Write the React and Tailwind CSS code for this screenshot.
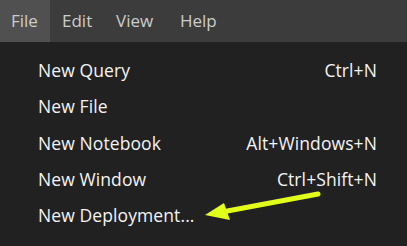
const items = [
    { label: "New Query", shortcut: "Ctrl+N" },
    { label: "New File", shortcut: "" },
    { label: "New Notebook", shortcut: "Alt+Windows+N" },
    { label: "New Window", shortcut: "Ctrl+Shift+N" },
    { label: "New Deployment...", shortcut: "" },
]

const App = () => {
    return (
        <div className="w-[407px] h-[246px] bg-[#212121] overflow-hidden font-['Open_Sans',sans-serif] relative">
            {/* Menu bar */}
            <div className="h-[42px] bg-[#3c3c3c] flex items-stretch text-[17px] text-[#cccccc]">
                <div className="w-[50px] bg-[#505050] flex items-center pl-[11px]">File</div>
                <div className="w-[58px] flex items-center pl-[12px]">Edit</div>
                <div className="w-[64px] flex items-center pl-[8px]">View</div>
                <div className="flex items-center pl-[8px]">Help</div>
            </div>

            {/* Dropdown */}
            <div className="pt-[10px] pl-[38px] pr-[30px] text-[17.5px] tracking-[0.1px] text-[#f4f4f4]">
                {items.map((item) => (
                    <div key={item.label} className="h-[36.25px] flex items-center justify-between">
                        <span>{item.label}</span>
                        <span>{item.shortcut}</span>
                    </div>
                ))}
            </div>

            {/* Callout arrow */}
            <svg className="absolute left-0 top-0" width="407" height="246" viewBox="0 0 407 246">
                <line x1="318" y1="194" x2="222" y2="212" stroke="#e2ff1a" strokeWidth="5" strokeLinecap="round" />
                <polygon points="205,215 224,203 230,220" fill="#e2ff1a" />
            </svg>
        </div>
    )
}

export default App
